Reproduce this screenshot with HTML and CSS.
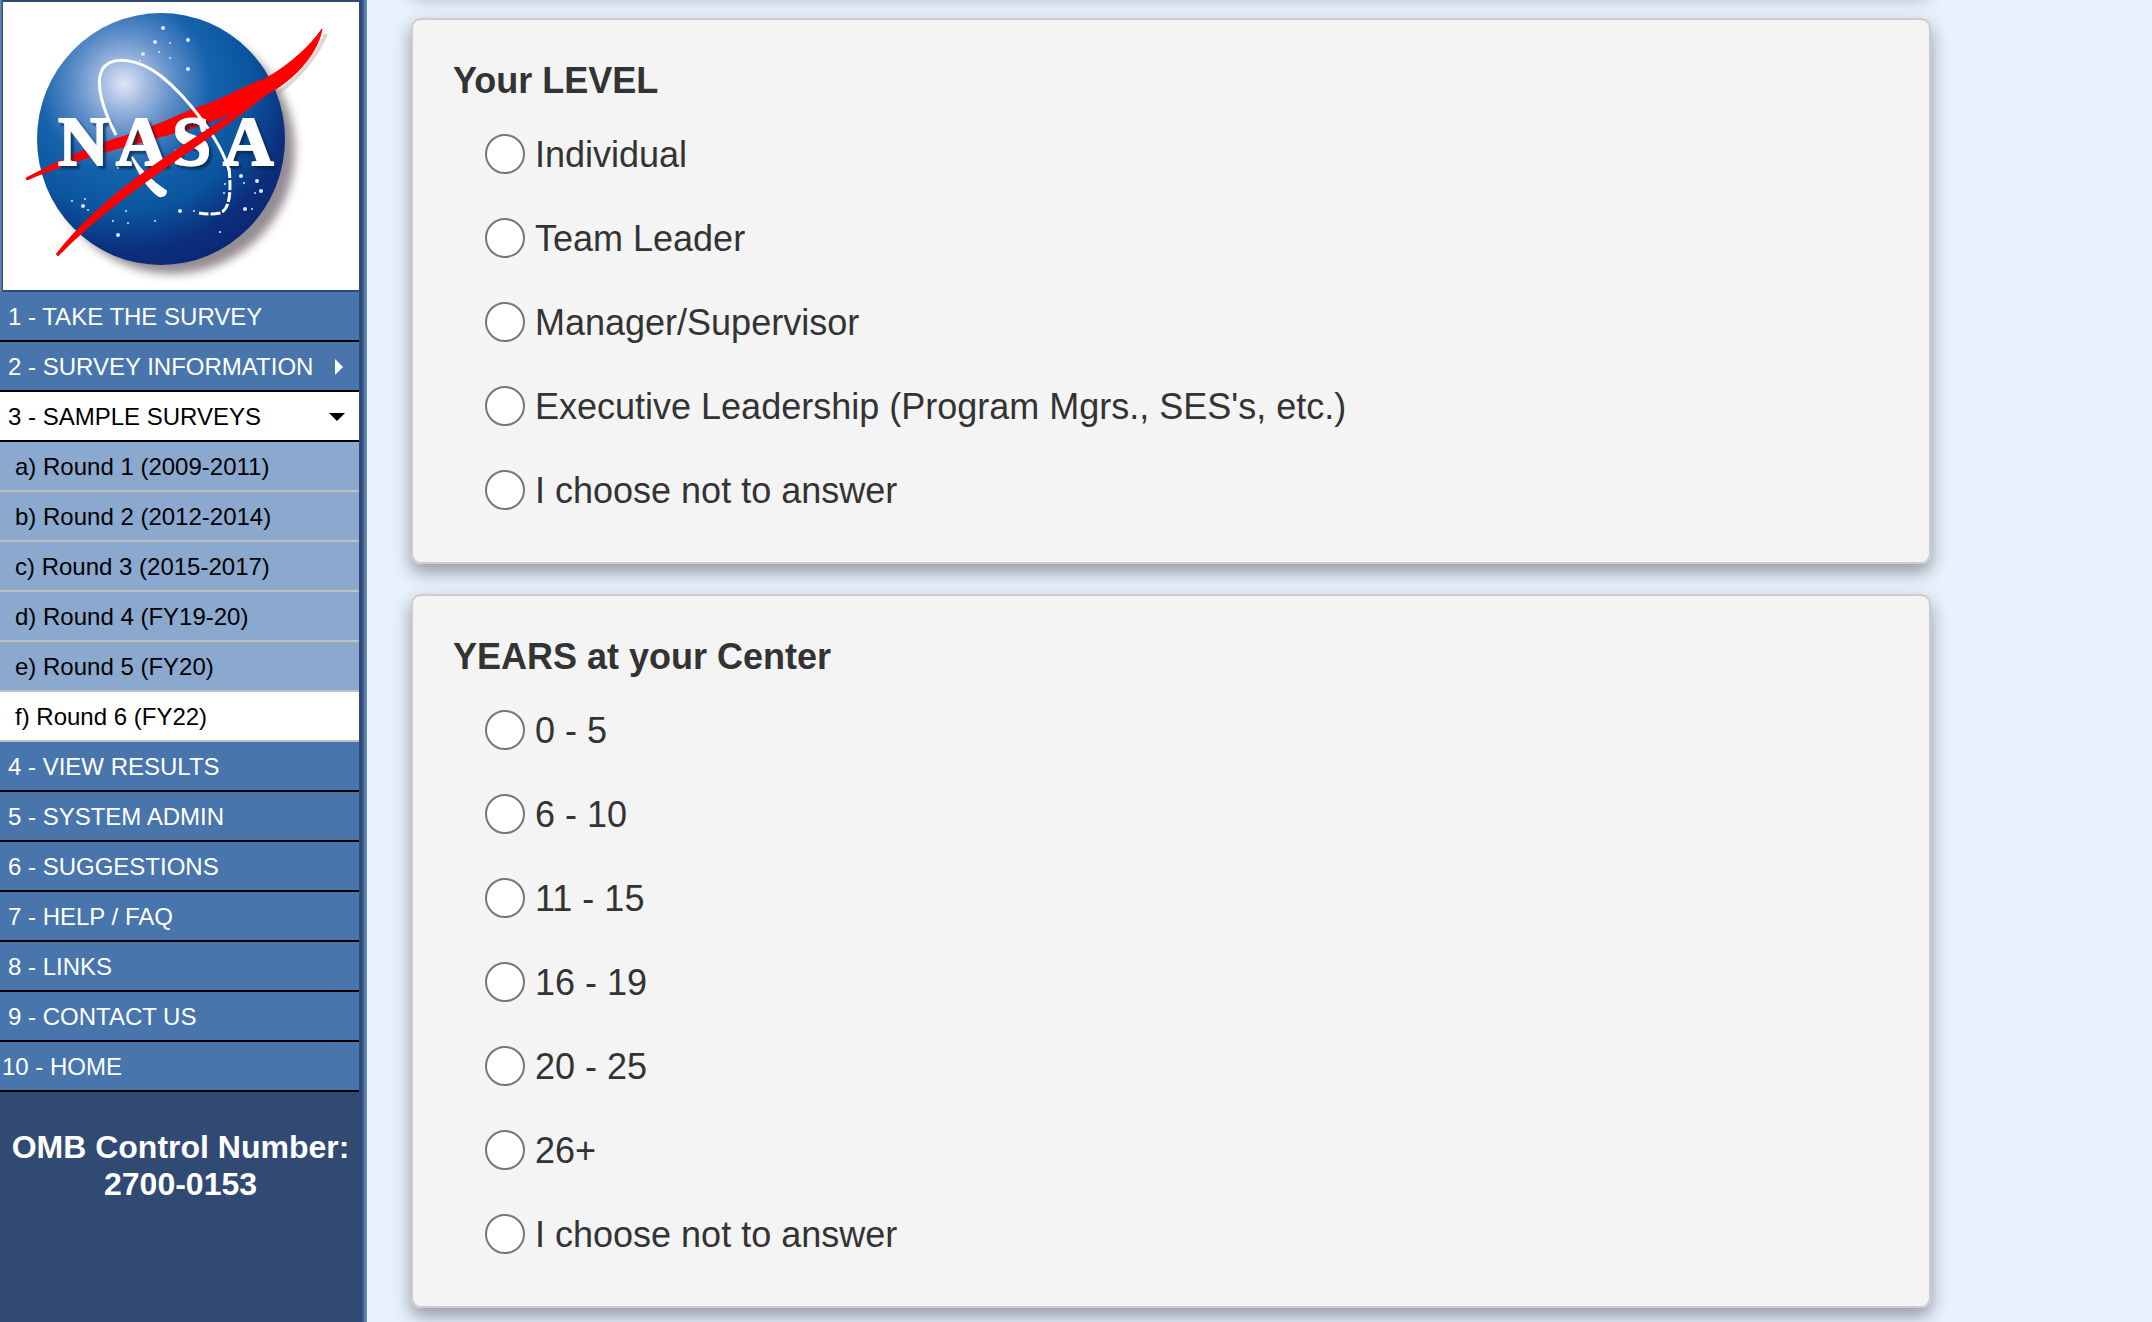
FILE: index.html
```html
<!DOCTYPE html>
<html lang="en">
<head>
<meta charset="utf-8">
<title>NASA Survey</title>
<link rel="stylesheet" href="styles.css">
</head>
<body>
<div class="page">
  <aside class="sidebar">
    <div class="logo">
      <svg viewBox="0 0 356 288" role="img" aria-label="NASA">
        <defs>
          <radialGradient id="globe" gradientUnits="userSpaceOnUse" cx="121" cy="82" r="205">
            <stop offset="0" stop-color="#dfe5f6"/>
            <stop offset=".12" stop-color="#9db7de"/>
            <stop offset=".25" stop-color="#5c8dc8"/>
            <stop offset=".42" stop-color="#1762ac"/>
            <stop offset=".62" stop-color="#0b559f"/>
            <stop offset=".82" stop-color="#0b2e7c"/>
            <stop offset="1" stop-color="#0b246f"/>
          </radialGradient>
          <filter id="soft" x="-20%" y="-20%" width="140%" height="140%"><feGaussianBlur stdDeviation="5"/></filter>
          <filter id="drop"><feDropShadow dx="3" dy="3" stdDeviation="1" flood-color="#062048" flood-opacity=".7"/></filter>
        </defs>
        <ellipse cx="169" cy="148" rx="123" ry="124" fill="#5c5058" opacity=".65" filter="url(#soft)"/>
        <path d="M266 98Q308 68 323 32" fill="none" stroke="#b09a9a" stroke-width="4" opacity=".4"/>
        <ellipse cx="158" cy="137" rx="124" ry="126" fill="url(#globe)"/>
        <g fill="#d7e9fa">
          <circle cx="160" cy="26" r="2"/><circle cx="185" cy="38" r="2"/><circle cx="152" cy="40" r="2"/><circle cx="167" cy="41" r="1"/><circle cx="156" cy="50" r="1"/><circle cx="140" cy="52" r="2"/><circle cx="137" cy="59" r="1"/><circle cx="167" cy="56" r="1"/><circle cx="185" cy="67" r="2"/>
          <circle cx="115" cy="166" r="1"/><circle cx="115" cy="191" r="1"/><circle cx="82" cy="197" r="1"/><circle cx="80" cy="204" r="2"/><circle cx="85" cy="208" r="1"/><circle cx="69" cy="199" r="1"/><circle cx="103" cy="204" r="1"/><circle cx="123" cy="209" r="1"/><circle cx="110" cy="219" r="1"/><circle cx="125" cy="221" r="1"/><circle cx="115" cy="233" r="2"/><circle cx="152" cy="219" r="1"/><circle cx="177" cy="209" r="2"/>
          <circle cx="191" cy="209" r="1"/><circle cx="217" cy="230" r="1"/><circle cx="238" cy="174" r="2"/><circle cx="241" cy="181" r="1"/><circle cx="254" cy="179" r="2"/><circle cx="252" cy="191" r="1"/><circle cx="258" cy="189" r="2"/><circle cx="242" cy="207" r="2"/><circle cx="249" cy="207" r="1"/><circle cx="222" cy="182" r="1"/><circle cx="221" cy="191" r="1"/>
        </g>
        <path d="M23 176C60 157 90 143 122 134C160 122 180 110 205 102C230 92 246 82 262 77C288 62 307 44 319 27C315 51 292 77 266 91C235 110 200 125 160 134C125 144 75 156 24 178Z" fill="#f00" stroke="#f00" stroke-width="1"/>
        <g class="letters" filter="url(#drop)">
          <text x="55" y="163">N</text><text x="113" y="163">A</text><text x="169" y="163">S</text><text x="220" y="163">A</text>
        </g>
        <path d="M113 133C100 108 92 82 99 68C108 52 136 57 158 74C185 96 217 137 226 168" fill="none" stroke="#fff" stroke-width="3"/>
        <path d="M226 166C229 196 225 208 217 211Q207 213 196 211" fill="none" stroke="#fff" stroke-width="3" stroke-dasharray="10 2"/>
        <path d="M129 155Q142 176 163 189Q163 195 156 194Q141 183 129 155Z" fill="#fff" stroke="#fff" stroke-width="2"/>
        <path d="M54 252C104 188 180 144 268 88C205 140 118 188 55 253Z" fill="#f00" stroke="#f00" stroke-width="2"/>
      </svg>
    </div>
    <nav>
      <ul class="menu">
        <li><a href="#take">1 - TAKE THE SURVEY</a></li>
        <li><a href="#info">2 - SURVEY INFORMATION <svg class="arrow" viewBox="0 0 16 16" aria-hidden="true"><path d="M6 0L14 8L6 16Z"/></svg></a></li>
        <li><a class="open" href="#samples">3 - SAMPLE SURVEYS <svg class="arrow" viewBox="0 0 16 16" aria-hidden="true"><path d="M0 4H16L8 12Z"/></svg></a>
          <ul class="submenu">
            <li><a href="#r1">a) Round 1 (2009-2011)</a></li>
            <li><a href="#r2">b) Round 2 (2012-2014)</a></li>
            <li><a href="#r3">c) Round 3 (2015-2017)</a></li>
            <li><a href="#r4">d) Round 4 (FY19-20)</a></li>
            <li><a href="#r5">e) Round 5 (FY20)</a></li>
            <li><a class="current" href="#r6">f) Round 6 (FY22)</a></li>
          </ul>
        </li>
        <li><a href="#results">4 - VIEW RESULTS</a></li>
        <li><a href="#admin">5 - SYSTEM ADMIN</a></li>
        <li><a href="#suggestions">6 - SUGGESTIONS</a></li>
        <li><a href="#help">7 - HELP / FAQ</a></li>
        <li><a href="#links">8 - LINKS</a></li>
        <li><a href="#contact">9 - CONTACT US</a></li>
        <li><a class="wide-number" href="#home">10 - HOME</a></li>
      </ul>
    </nav>
    <p class="omb">OMB Control Number: 2700-0153</p>
  </aside>
  <main class="survey">
    <div class="card card-previous"></div>
    <fieldset class="card">
      <legend>Your LEVEL</legend>
      <label><input type="radio" name="level">Individual</label>
      <label><input type="radio" name="level">Team Leader</label>
      <label><input type="radio" name="level">Manager/Supervisor</label>
      <label><input type="radio" name="level">Executive Leadership (Program Mgrs., SES's, etc.)</label>
      <label><input type="radio" name="level">I choose not to answer</label>
    </fieldset>
    <fieldset class="card">
      <legend>YEARS at your Center</legend>
      <label><input type="radio" name="years">0 - 5</label>
      <label><input type="radio" name="years">6 - 10</label>
      <label><input type="radio" name="years">11 - 15</label>
      <label><input type="radio" name="years">16 - 19</label>
      <label><input type="radio" name="years">20 - 25</label>
      <label><input type="radio" name="years">26+</label>
      <label><input type="radio" name="years">I choose not to answer</label>
    </fieldset>
  </main>
</div>
</body>
</html>
```
FILE: styles.css
```css
* { box-sizing: border-box; }
body {
  margin: 0;
  background: #e8f0fc;
  color: #333;
  font-family: "Liberation Sans", Arial, sans-serif;
}
.page {
  display: grid;
  grid-template-columns: 367px 1fr;
  height: 100vh;
  overflow: hidden;
}
.sidebar {
  padding-right: 8px;
  background: linear-gradient(to left, #6b93c6, #4b6fa3 3px, #304a73 5px);
}
.logo {
  height: 292px;
  padding: 2px 0 2px 3px;
  background: linear-gradient(to right, #6b93c6, #304a73 3px);
}
.logo svg {
  display: block;
  width: 100%;
  height: 288px;
  background: #fff;
}
.letters {
  fill: #fff;
  stroke: #fff;
  stroke-width: 2px;
  font: bold 70px "Liberation Serif", serif;
}
.menu, .submenu {
  margin: 0;
  padding: 0;
  list-style: none;
}
.menu a {
  display: flex;
  align-items: center;
  justify-content: space-between;
  height: 50px;
  padding: 2px 14px 0 8px;
  border-bottom: 2px solid #000;
  background: #4875ac;
  color: #fff;
  font-size: 24px;
  text-decoration: none;
  white-space: nowrap;
}
.menu a.wide-number { padding-left: 2px; }
.menu a.open {
  background: #fff;
  color: #000;
}
.menu .submenu a {
  padding-left: 15px;
  border-bottom-color: #c0c0c0;
  background: #8ba8cf;
  color: #000;
}
.menu .submenu a.current { background: #fff; }
.arrow {
  width: 16px;
  height: 16px;
  fill: currentColor;
}
.omb {
  margin: 0;
  padding: 37px 8px 37px 10px;
  color: #fff;
  font-size: 32px;
  font-weight: bold;
  line-height: 37px;
  text-align: center;
}
.survey {
  display: flex;
  flex-direction: column;
  gap: 30px;
  padding: 0 221px 0 44px;
}
.card {
  flex: none;
  margin: 0;
  padding: 41px 40px 30px;
  border: 2px solid #ccc;
  border-radius: 10px;
  background: #f4f4f4;
  box-shadow: 0 8px 16px rgba(0, 0, 0, .3), 0 8px 24px rgba(0, 0, 0, .08);
  font-size: 36px;
}
.card-previous {
  height: 100px;
  margin-top: -112px;
}
.card legend {
  float: left;
  width: 100%;
  margin-bottom: 11px;
  padding: 0;
  font-weight: bold;
  line-height: 40px;
}
.card label {
  display: flex;
  clear: both;
  align-items: center;
  gap: 10px;
  height: 84px;
  padding: 2px 0 0 32px;
}
.card input {
  flex: none;
  appearance: none;
  width: 40px;
  height: 40px;
  margin: 0 0 2px;
  border: 2px solid #767676;
  border-radius: 50%;
  background: #fff;
}
```
